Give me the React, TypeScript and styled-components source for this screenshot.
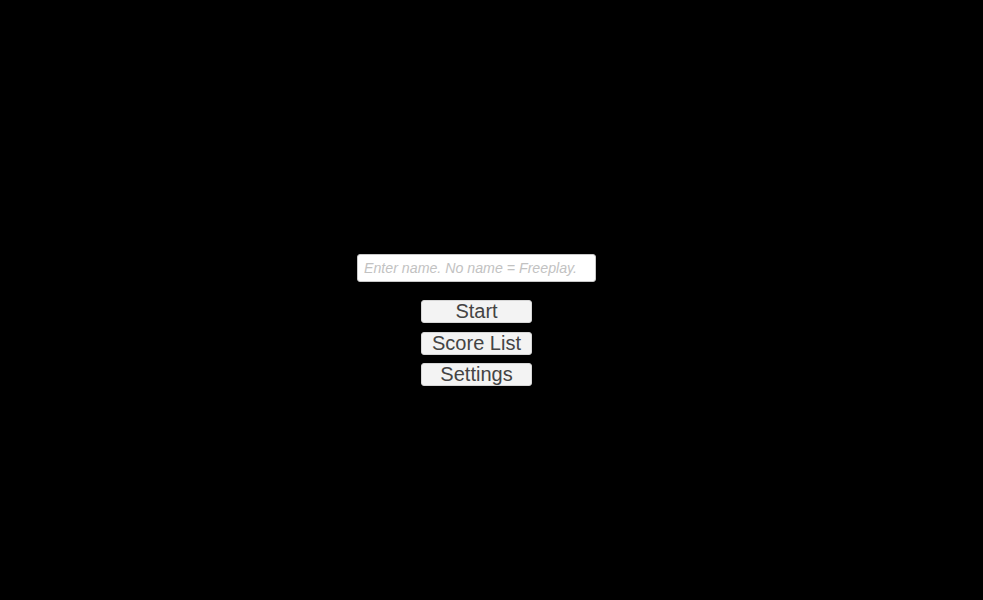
import React, { useState } from 'react'
import styled, { createGlobalStyle } from 'styled-components'

const GlobalStyle = createGlobalStyle`
  html, body {
    margin: 0;
    padding: 0;
    background: #000;
  }
  body {
    font-family: "Liberation Sans", Arial, sans-serif;
  }
`

const Screen = styled.div`
  width: 983px;
  height: 600px;
  background: #000;
  padding: 254px 0 0 357px;
  box-sizing: border-box;
`

const Menu = styled.div`
  width: 239px;
  display: flex;
  flex-direction: column;
  align-items: center;
`

const NameInput = styled.input`
  width: 239px;
  height: 28px;
  box-sizing: border-box;
  border: 1px solid #c8c8c8;
  border-radius: 3px;
  background: #fff;
  padding: 0 6px;
  font-family: "Liberation Sans", Arial, sans-serif;
  font-size: 14.2px;
  color: #323232;
  outline: none;

  &::placeholder {
    color: #c2c2c2;
    font-style: italic;
  }
`

const ButtonList = styled.div`
  margin-top: 18px;
  display: flex;
  flex-direction: column;
  gap: 8.5px;
`

const MenuButton = styled.button`
  width: 111px;
  height: 23px;
  box-sizing: border-box;
  border: 1px solid #d6d6d6;
  border-radius: 3px;
  background: #f3f3f3;
  color: #444;
  font-family: "Liberation Sans", Arial, sans-serif;
  font-size: 20px;
  line-height: 21px;
  padding: 0;
  cursor: pointer;
`

export default function App() {
  const [name, setName] = useState('')

  return (
    <>
      <GlobalStyle />
      <Screen>
        <Menu>
          <NameInput
            value={name}
            onChange={(e) => setName(e.target.value)}
            placeholder="Enter name. No name = Freeplay."
          />
          <ButtonList>
            <MenuButton>Start</MenuButton>
            <MenuButton>Score List</MenuButton>
            <MenuButton>Settings</MenuButton>
          </ButtonList>
        </Menu>
      </Screen>
    </>
  )
}
